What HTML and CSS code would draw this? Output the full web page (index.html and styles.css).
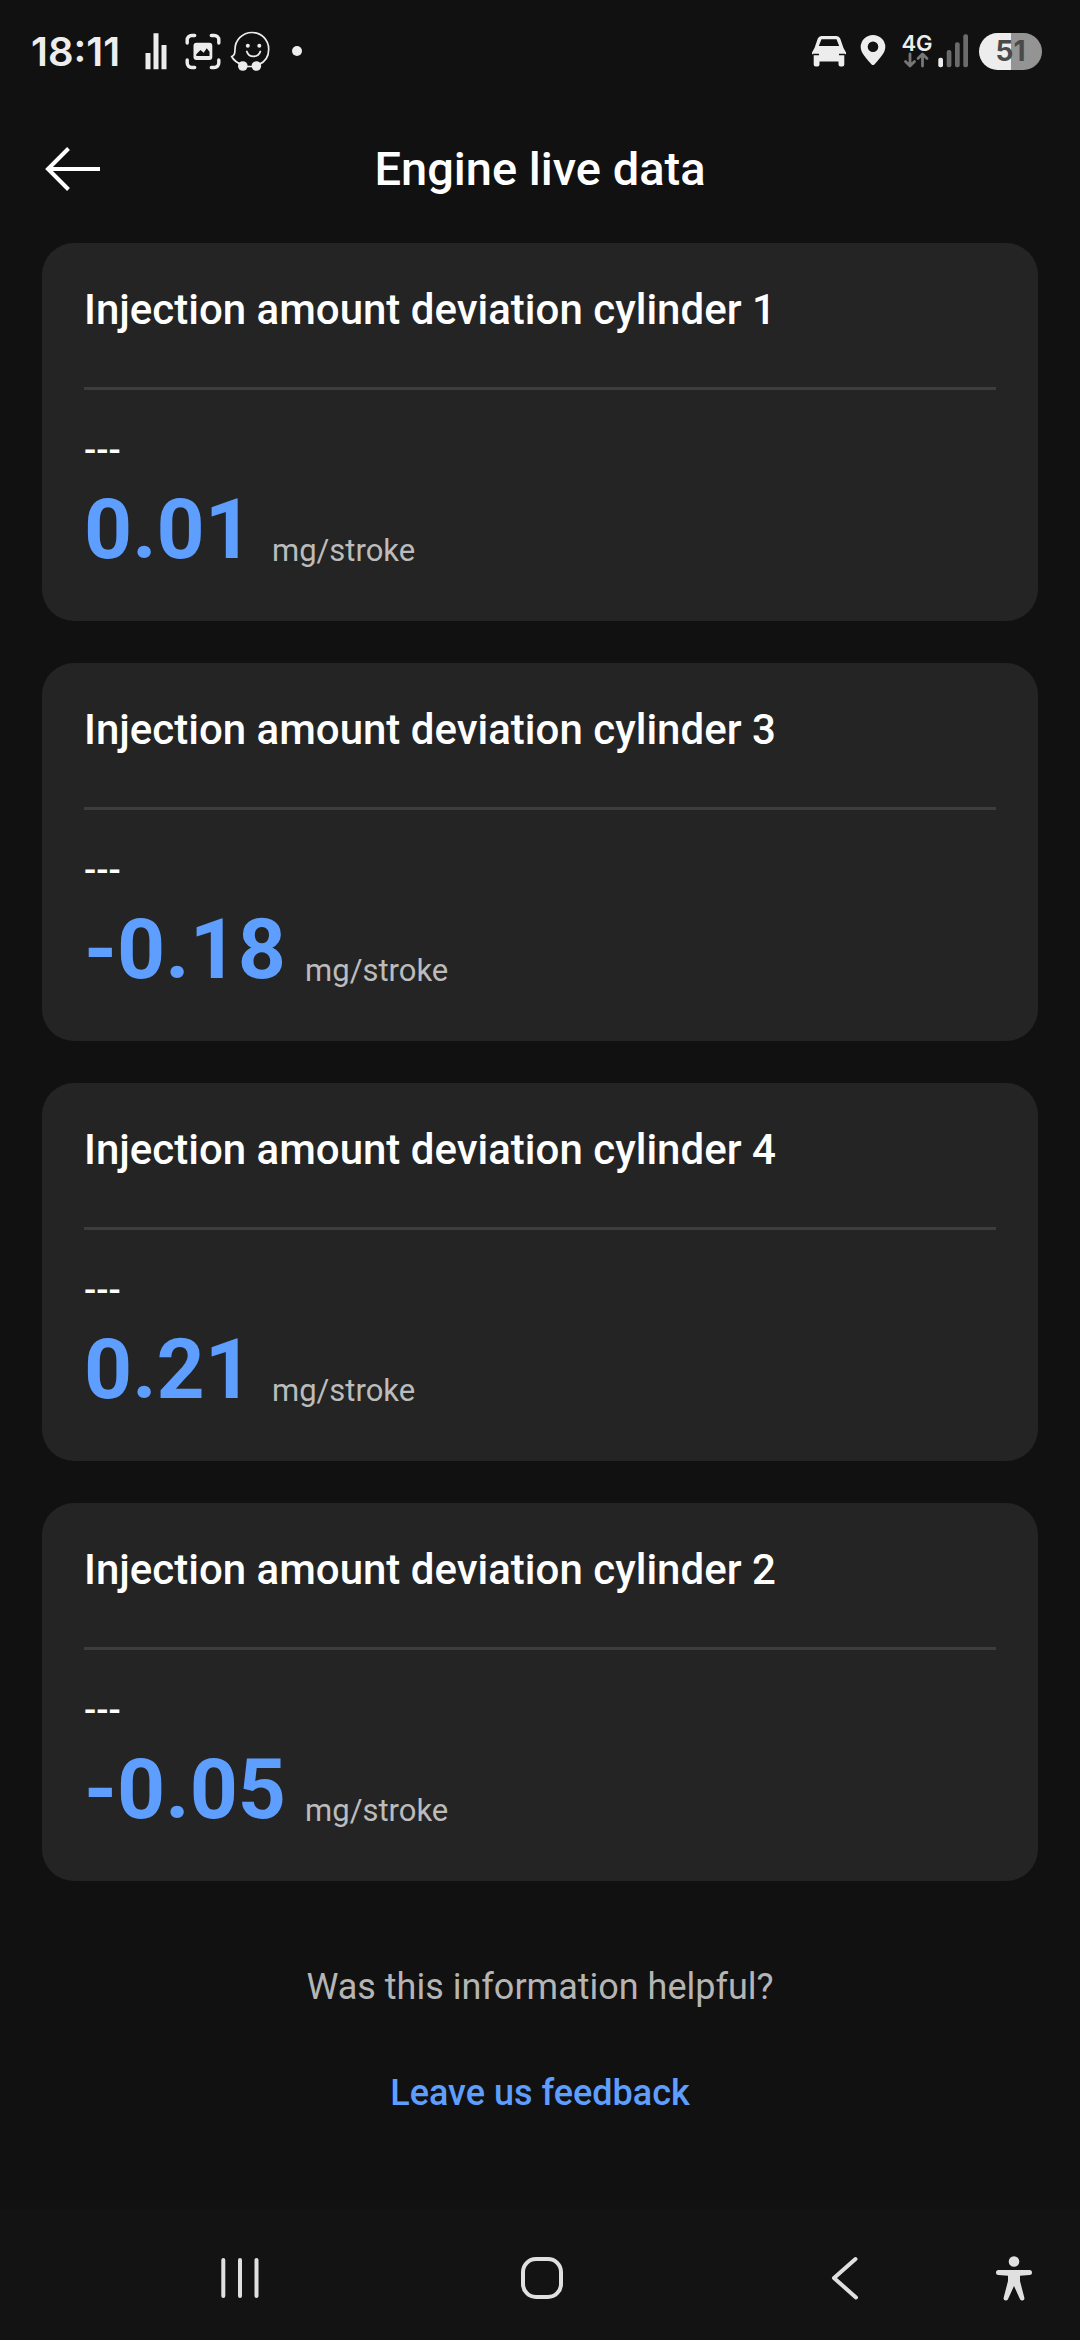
FILE: index.html
```
<!DOCTYPE html>
<html lang="en">
<head>
    <meta charset="UTF-8">
    <meta name="viewport" content="width=device-width, initial-scale=1.0">
    <title>Engine live data</title>
    <link rel="stylesheet" href="styles.css">
</head>
<body>
    <!-- System status bar -->
    <div class="status-bar">
        <div class="status-left">
            <span class="clock">18:11</span>
            <svg class="notification" viewBox="0 0 40 40">
                <path d="M9.5 22h5v16.3h-5zM17.5 2.3h5v36h-5zM25.5 14h5v24.3h-5z" fill="#ededed"/>
            </svg>
            <svg class="notification" viewBox="0 0 40 40">
                <path d="M4.2 12V9a4.5 4.5 0 0 1 4.5-4.5h3M28.3 4.5h3A4.5 4.5 0 0 1 35.8 9v3M35.8 29v3a4.5 4.5 0 0 1-4.5 4.5h-3M11.7 36.5h-3A4.5 4.5 0 0 1 4.2 32v-3" fill="none" stroke="#ededed" stroke-width="3.4" stroke-linecap="round"/>
                <rect x="10.5" y="11.7" width="18.8" height="17.3" rx="3" fill="#ededed"/>
                <path d="M13.3 25v-1.800l4.200-4.200 3.200 2.800 3-4.500 2.800 3.500V25z" fill="#111111"/>
            </svg>
            <svg class="notification" viewBox="0 0 40 40">
                <path d="M12 33.500C7.500 32 3.500 29 1.600 25.500 4.500 25 5 22.500 5 18.500 5 9 12.500 1.500 22 1.500S38.700 9 38.700 18.200C38.700 25.500 34.500 31 29 33.500M17 35.500h6" fill="none" stroke="#ededed" stroke-width="1.700" stroke-linejoin="round"/>
                <circle cx="12.800" cy="35" r="4.800" fill="#ededed"/>
                <circle cx="26.400" cy="35" r="4.800" fill="#ededed"/>
                <circle cx="17.800" cy="14.700" r="2" fill="#ededed"/>
                <circle cx="29.300" cy="14.700" r="2" fill="#ededed"/>
                <path d="M16.800 20.500c2 6.500 11.500 6.500 13.500 0" fill="none" stroke="#ededed" stroke-width="1.800" stroke-linecap="round"/>
            </svg>
            <svg class="notification" viewBox="0 0 40 40">
                <circle cx="20" cy="20" r="5" fill="#ededed"/>
            </svg>
        </div>
        <div class="status-right">
            <svg class="indicator" viewBox="0 0 36 40">
                <path fill-rule="evenodd" d="M10.500 5h15a4 4 0 0 1 3.700 2.500L32.500 17l2.500 4.500v1.800h-1.700V33.500a2 2 0 0 1-2 2h-1.800a2 2 0 0 1-2-2V30.500H8.500v3a2 2 0 0 1-2 2H4.700a2 2 0 0 1-2-2V23.300H1v-1.800L3.500 17 6.800 7.500A4 4 0 0 1 10.500 5zM10.500 8.300L7.800 15h20.400l-2.700-6.700z" fill="#ededed"/>
                <path d="M2 23.400h6M28 23.400h6" stroke="#111111" stroke-width="1.500"/>
            </svg>
            <svg class="indicator" viewBox="0 0 36 40">
                <path fill-rule="evenodd" d="M18 34c-1 0-1.700-.8-2.500-1.800C11.500 27.500 5.700 22 5.700 16a12.300 12 0 0 1 24.600 0c0 6-5.800 11.500-9.800 16.200-.8 1-1.500 1.800-2.500 1.800zM18 10.400a5.300 5.300 0 1 0 0 10.600 5.300 5.300 0 0 0 0-10.600z" fill="#ededed"/>
            </svg>
            <div class="network">
                <div class="network-type">
                    <span>4G</span>
                    <svg viewBox="0 0 36 16">
                        <path d="M11 2v11M6.500 9.500L11 14l4.500-4.500M23.500 14V3M19 6.500L23.500 2 28 6.500" fill="none" stroke="#777777" stroke-width="2.800" stroke-linecap="round" stroke-linejoin="round"/>
                    </svg>
                </div>
                <svg class="indicator" viewBox="0 0 36 40">
                    <rect x="3.300" y="26.700" width="4.700" height="9.600" rx="2" fill="#ededed"/>
                    <rect x="11.700" y="19" width="4.700" height="17.300" rx="2" fill="#6b6b6b"/>
                    <rect x="20" y="11.300" width="4.700" height="25" rx="2" fill="#6b6b6b"/>
                    <rect x="28.300" y="3.300" width="4.700" height="33" rx="2" fill="#6b6b6b"/>
                </svg>
            </div>
            <span class="battery">51</span>
        </div>
    </div>

    <header class="app-header">
        <button class="back-button" aria-label="Back">
            <svg viewBox="0 0 56 44">
                <path d="M55 22H3M23.500 1.500L3 22l20.500 20.500" fill="none" stroke="#ffffff" stroke-width="4"/>
            </svg>
        </button>
        <h1>Engine live data</h1>
    </header>

    <main>
        <section class="card">
            <h2>Injection amount deviation cylinder 1</h2>
            <p class="state">---</p>
            <p class="reading"><span class="value">0.01</span><span class="unit">mg/stroke</span></p>
        </section>
        <section class="card">
            <h2>Injection amount deviation cylinder 3</h2>
            <p class="state">---</p>
            <p class="reading"><span class="value">-0.18</span><span class="unit">mg/stroke</span></p>
        </section>
        <section class="card">
            <h2>Injection amount deviation cylinder 4</h2>
            <p class="state">---</p>
            <p class="reading"><span class="value">0.21</span><span class="unit">mg/stroke</span></p>
        </section>
        <section class="card">
            <h2>Injection amount deviation cylinder 2</h2>
            <p class="state">---</p>
            <p class="reading"><span class="value">-0.05</span><span class="unit">mg/stroke</span></p>
        </section>

        <div class="feedback">
            <p>Was this information helpful?</p>
            <a href="#">Leave us feedback</a>
        </div>
    </main>

    <!-- System navigation bar -->
    <nav class="nav-bar">
        <button aria-label="Recent apps">
            <svg width="44" height="44" viewBox="0 0 44 44">
                <path d="M5.300 4v36M22 4v36M38.500 4v36" stroke="#e0e0e0" stroke-width="4" stroke-linecap="round"/>
            </svg>
        </button>
        <button aria-label="Home">
            <svg width="44" height="44" viewBox="0 0 44 44">
                <rect x="3" y="3" width="38" height="38" rx="13" fill="none" stroke="#e0e0e0" stroke-width="4"/>
            </svg>
        </button>
        <button aria-label="Back">
            <svg width="44" height="44" viewBox="0 0 44 44">
                <path d="M33.500 3L12 22l22 19.500" fill="none" stroke="#e0e0e0" stroke-width="4" stroke-linecap="round" stroke-linejoin="round"/>
            </svg>
        </button>
        <button aria-label="Accessibility">
            <svg width="38" height="46" viewBox="0 0 38 46">
                <circle cx="19" cy="6.500" r="5.300" fill="#e0e0e0"/>
                <path d="M3.500 15h31a2.500 2.500 0 0 1 0 5L25 20.700V26l4.300 16.500a2.300 2.300 0 0 1-4.500 1.300L19 31l-5.800 12.800a2.300 2.300 0 0 1-4.500-1.300L13 26v-5.300L3.500 20a2.500 2.500 0 0 1 0-5z" fill="#e0e0e0"/>
            </svg>
        </button>
    </nav>
</body>
</html>
```
FILE: styles.css
```
* {
    box-sizing: border-box;
}
body {
    font-family: Roboto, sans-serif;
    display: flex;
    flex-direction: column;
    min-height: 100vh;
    margin: 0;
    background-color: #111111;
    color: #ffffff;
}
h1, h2, p {
    margin: 0;
}
button {
    display: flex;
    align-items: center;
    padding: 0;
    border: 0;
    background: none;
    cursor: pointer;
}
svg {
    display: block;
}

/* Status bar */
.status-bar {
    display: flex;
    justify-content: space-between;
    height: 102px;
    padding: 0 38px 0 31px;
    font-family: Inter, sans-serif;
    color: #ededed;
}
.status-left,
.status-right {
    display: flex;
    align-items: center;
}
.status-left {
    gap: 7px;
}
.status-right {
    gap: 8px;
}
.clock {
    margin-right: 9px;
    font-size: 40px;
    font-weight: 600;
}
.notification {
    width: 40px;
    height: 40px;
}
.indicator {
    width: 36px;
    height: 40px;
}
.network {
    display: flex;
    align-items: center;
}
.network-type {
    width: 36px;
    font-size: 22px;
    font-weight: 600;
    line-height: 18px;
}
.network-type span {
    display: block;
    text-align: center;
}
.battery {
    width: 63px;
    border-radius: 19px;
    background: linear-gradient(to right, #ededed 51%, #949494 51%);
    color: #4a4a4a;
    font-size: 28px;
    font-weight: 700;
    line-height: 37px;
    text-align: center;
}

/* App header */
.app-header {
    display: grid;
    grid-template-columns: 1fr auto 1fr;
    align-items: center;
    height: 134px;
    padding: 0 45px;
}
.back-button svg {
    width: 56px;
    height: 44px;
}
.app-header h1 {
    font-size: 47px;
    font-weight: 500;
    line-height: 56px;
}

/* Cards */
main {
    display: flex;
    flex: 1;
    flex-direction: column;
    gap: 42px;
    padding: 7px 42px 42px;
}
.card {
    padding: 42px;
    border-radius: 32px;
    background-color: #242424;
}
.card h2 {
    margin-bottom: 40px;
    padding-bottom: 52px;
    border-bottom: 3px solid #3d3d3d;
    font-size: 42px;
    font-weight: 500;
    line-height: 50px;
}
.state {
    margin-bottom: 9px;
    font-size: 36px;
    font-weight: 500;
    line-height: 42px;
}
.reading {
    display: flex;
    align-items: flex-end;
    gap: 19px;
}
.value {
    color: #5e9eff;
    font-size: 84px;
    font-weight: 700;
    line-height: 98px;
}
.unit {
    color: #bcbcbc;
    font-size: 31px;
    line-height: 56px;
}

/* Feedback */
.feedback {
    display: flex;
    flex-direction: column;
    align-items: center;
    gap: 64px;
    padding-top: 43px;
    font-size: 36px;
    line-height: 42px;
}
.feedback p {
    color: #b5b5b5;
}
.feedback a {
    color: #5e9eff;
    font-weight: 500;
    text-decoration: none;
}

/* Navigation bar */
.nav-bar {
    display: grid;
    grid-template-columns: 1fr 1fr 1fr 38px;
    height: 130px;
    padding: 6px 47px 0 89px;
    background-color: #131313;
}
.nav-bar button {
    justify-content: center;
}
```
